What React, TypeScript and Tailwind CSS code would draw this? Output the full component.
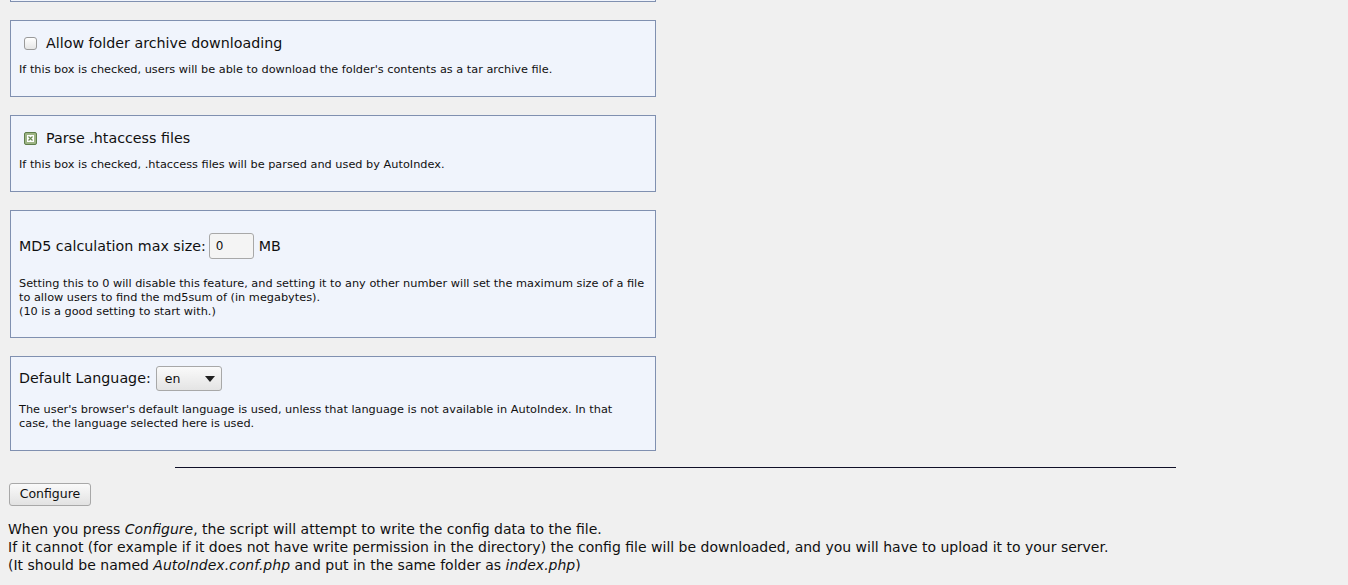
import React from 'react';

const FONT = "font-['DejaVu_Sans',sans-serif]";

function Panel({ children, className = '' }: { children: React.ReactNode; className?: string }) {
  return (
    <div className={`w-[646px] ml-[10px] border border-[#8090b0] bg-[#f0f4fc] px-[8px] ${className}`}>
      {children}
    </div>
  );
}

function Box({ checked }: { checked: boolean }) {
  if (!checked) {
    return (
      <span className="inline-block w-[13px] h-[13px] rounded-[3px] border border-[#9a9a9a] bg-gradient-to-b from-[#ffffff] to-[#e6e6e6]" />
    );
  }
  return (
    <span className="inline-flex items-center justify-center w-[13px] h-[13px] rounded-[2px] border border-[#5f7d4a] bg-[#9db485]">
      <svg width="7" height="7" viewBox="0 0 7 7">
        <rect x="0" y="0" width="7" height="7" fill="#ffffff" />
        <path d="M1.5 1.5 L5.5 5.5 M5.5 1.5 L1.5 5.5" stroke="#6b8a52" strokeWidth="1.2" />
      </svg>
    </span>
  );
}

export default function App() {
  return (
    <div className={`min-h-[585px] bg-[#f0f0f0] text-[#101010] ${FONT} overflow-hidden`}>
      <div className="w-[646px] ml-[10px] h-[2px] border-x border-b border-[#8090b0] bg-[#f0f4fc]" />

      <Panel className="mt-[18px] h-[77px]">
        <div className="flex items-center gap-[9px] pt-[14px] ml-[5px] text-[14.25px] leading-[17px]">
          <Box checked={false} />
          <span>Allow folder archive downloading</span>
        </div>
        <p className="mt-[11px] text-[11.3px] leading-[14px] whitespace-nowrap">
          If this box is checked, users will be able to download the folder's contents as a tar archive file.
        </p>
      </Panel>

      <Panel className="mt-[18px] h-[77px]">
        <div className="flex items-center gap-[9px] pt-[14px] ml-[5px] text-[14.25px] leading-[17px]">
          <Box checked={true} />
          <span>Parse .htaccess files</span>
        </div>
        <p className="mt-[11px] text-[11.3px] leading-[14px] whitespace-nowrap">
          If this box is checked, .htaccess files will be parsed and used by AutoIndex.
        </p>
      </Panel>

      <Panel className="mt-[18px] h-[128px]">
        <div className="flex items-center pt-[22px] text-[14.25px] leading-[17px]">
          <span>MD5 calculation max size:</span>
          <input
            readOnly
            value="0"
            className="ml-[3px] w-[45px] h-[26px] px-[6px] text-[12px] rounded-[3px] border border-[#a8a8a8] bg-[#f4f4f4] outline-none"
          />
          <span className="ml-[5px]">MB</span>
        </div>
        <p className="mt-[18px] text-[11.3px] leading-[14px] whitespace-nowrap">
          Setting this to 0 will disable this feature, and setting it to any other number will set the maximum size of a file
          <br />
          to allow users to find the md5sum of (in megabytes).
          <br />
          (10 is a good setting to start with.)
        </p>
      </Panel>

      <Panel className="mt-[18px] h-[95px]">
        <div className="flex items-center pt-[9px] text-[14.25px] leading-[17px]">
          <span>Default Language:</span>
          <div className="ml-[5px] w-[66px] h-[25px] rounded-[3px] border border-[#a8a8a8] bg-gradient-to-b from-[#fafafa] to-[#e4e4e4] flex items-center justify-between pl-[8px] pr-[6px] text-[12.5px]">
            <span>en</span>
            <svg width="10" height="6" viewBox="0 0 10 6">
              <path d="M0 0 L10 0 L5 6 Z" fill="#202020" />
            </svg>
          </div>
        </div>
        <p className="mt-[12px] text-[11.3px] leading-[14px] whitespace-nowrap">
          The user's browser's default language is used, unless that language is not available in AutoIndex. In that
          <br />
          case, the language selected here is used.
        </p>
      </Panel>

      <div className="ml-[175px] mt-[16px] w-[1001px] h-px bg-[#101028]" />

      <button className="ml-[9px] mt-[15px] w-[82px] h-[23px] rounded-[3px] border border-[#a8a8a8] bg-gradient-to-b from-[#fafafa] to-[#e2e2e2] text-[12.5px] text-[#101010]">
        Configure
      </button>

      <div className="ml-[8px] mt-[14px] text-[14px] leading-[18px]">
        <p>
          When you press <i>Configure</i>, the script will attempt to write the config data to the file.
        </p>
        <p>
          If it cannot (for example if it does not have write permission in the directory) the config file will be downloaded, and you will have to upload it to your server.
        </p>
        <p>
          (It should be named <i>AutoIndex.conf.php</i> and put in the same folder as <i>index.php</i>)
        </p>
      </div>
    </div>
  );
}
